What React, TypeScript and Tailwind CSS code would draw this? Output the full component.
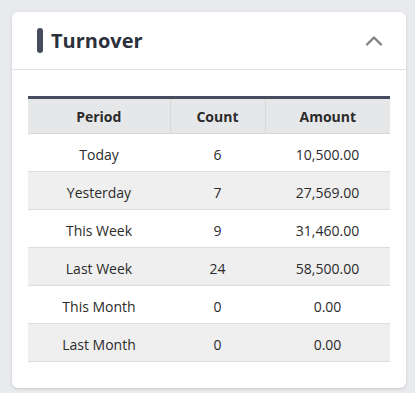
import { ChevronUp } from 'lucide-react';

const rows = [
  { period: 'Today', count: 6, amount: '10,500.00' },
  { period: 'Yesterday', count: 7, amount: '27,569.00' },
  { period: 'This Week', count: 9, amount: '31,460.00' },
  { period: 'Last Week', count: 24, amount: '58,500.00' },
  { period: 'This Month', count: 0, amount: '0.00' },
  { period: 'Last Month', count: 0, amount: '0.00' },
];

export default function App() {
  return (
    <div
      className="min-h-[393px] w-[415px] bg-[#e8eaed] p-3 text-[#2b2b2b]"
      style={{ fontFamily: '"Open Sans", "Noto Sans", sans-serif' }}
    >
      <div className="w-[394px] rounded-md bg-white shadow-[0_1px_3px_rgba(0,0,0,0.15)]">
        {/* Header */}
        <div className="flex h-[58px] items-center justify-between border-b border-[#dfe1e4] pl-[25px] pr-[18px]">
          <div className="flex items-center gap-2">
            <span className="h-[25px] w-[6px] rounded-full bg-[#454d5f]" />
            <h2 className="text-[20px] font-bold text-[#2a303c]">Turnover</h2>
          </div>
          <ChevronUp className="h-7 w-7 text-[#808080]" strokeWidth={2} />
        </div>

        {/* Table */}
        <div className="px-4 pb-[26px] pt-[26px]">
          <table className="w-full border-collapse text-[14px]">
            <thead>
              <tr className="border-t-[3px] border-[#454d5f] bg-[#e6e7e9]">
                <th className="h-[36px] w-[142px] border-b border-r border-[#d8d8d8] font-bold">Period</th>
                <th className="h-[36px] w-[95px] border-b border-r border-[#d8d8d8] font-bold">Count</th>
                <th className="h-[36px] border-b border-[#d8d8d8] font-bold">Amount</th>
              </tr>
            </thead>
            <tbody>
              {rows.map((r, i) => (
                <tr key={r.period} className={i % 2 === 1 ? 'bg-[#efefef]' : 'bg-white'}>
                  <td className="h-[38px] border-b border-[#dddddd] pt-[3px] text-center">{r.period}</td>
                  <td className="h-[38px] border-b border-[#dddddd] pt-[3px] text-center">{r.count}</td>
                  <td className="h-[38px] border-b border-[#dddddd] pt-[3px] text-center">{r.amount}</td>
                </tr>
              ))}
            </tbody>
          </table>
        </div>
      </div>
    </div>
  );
}
